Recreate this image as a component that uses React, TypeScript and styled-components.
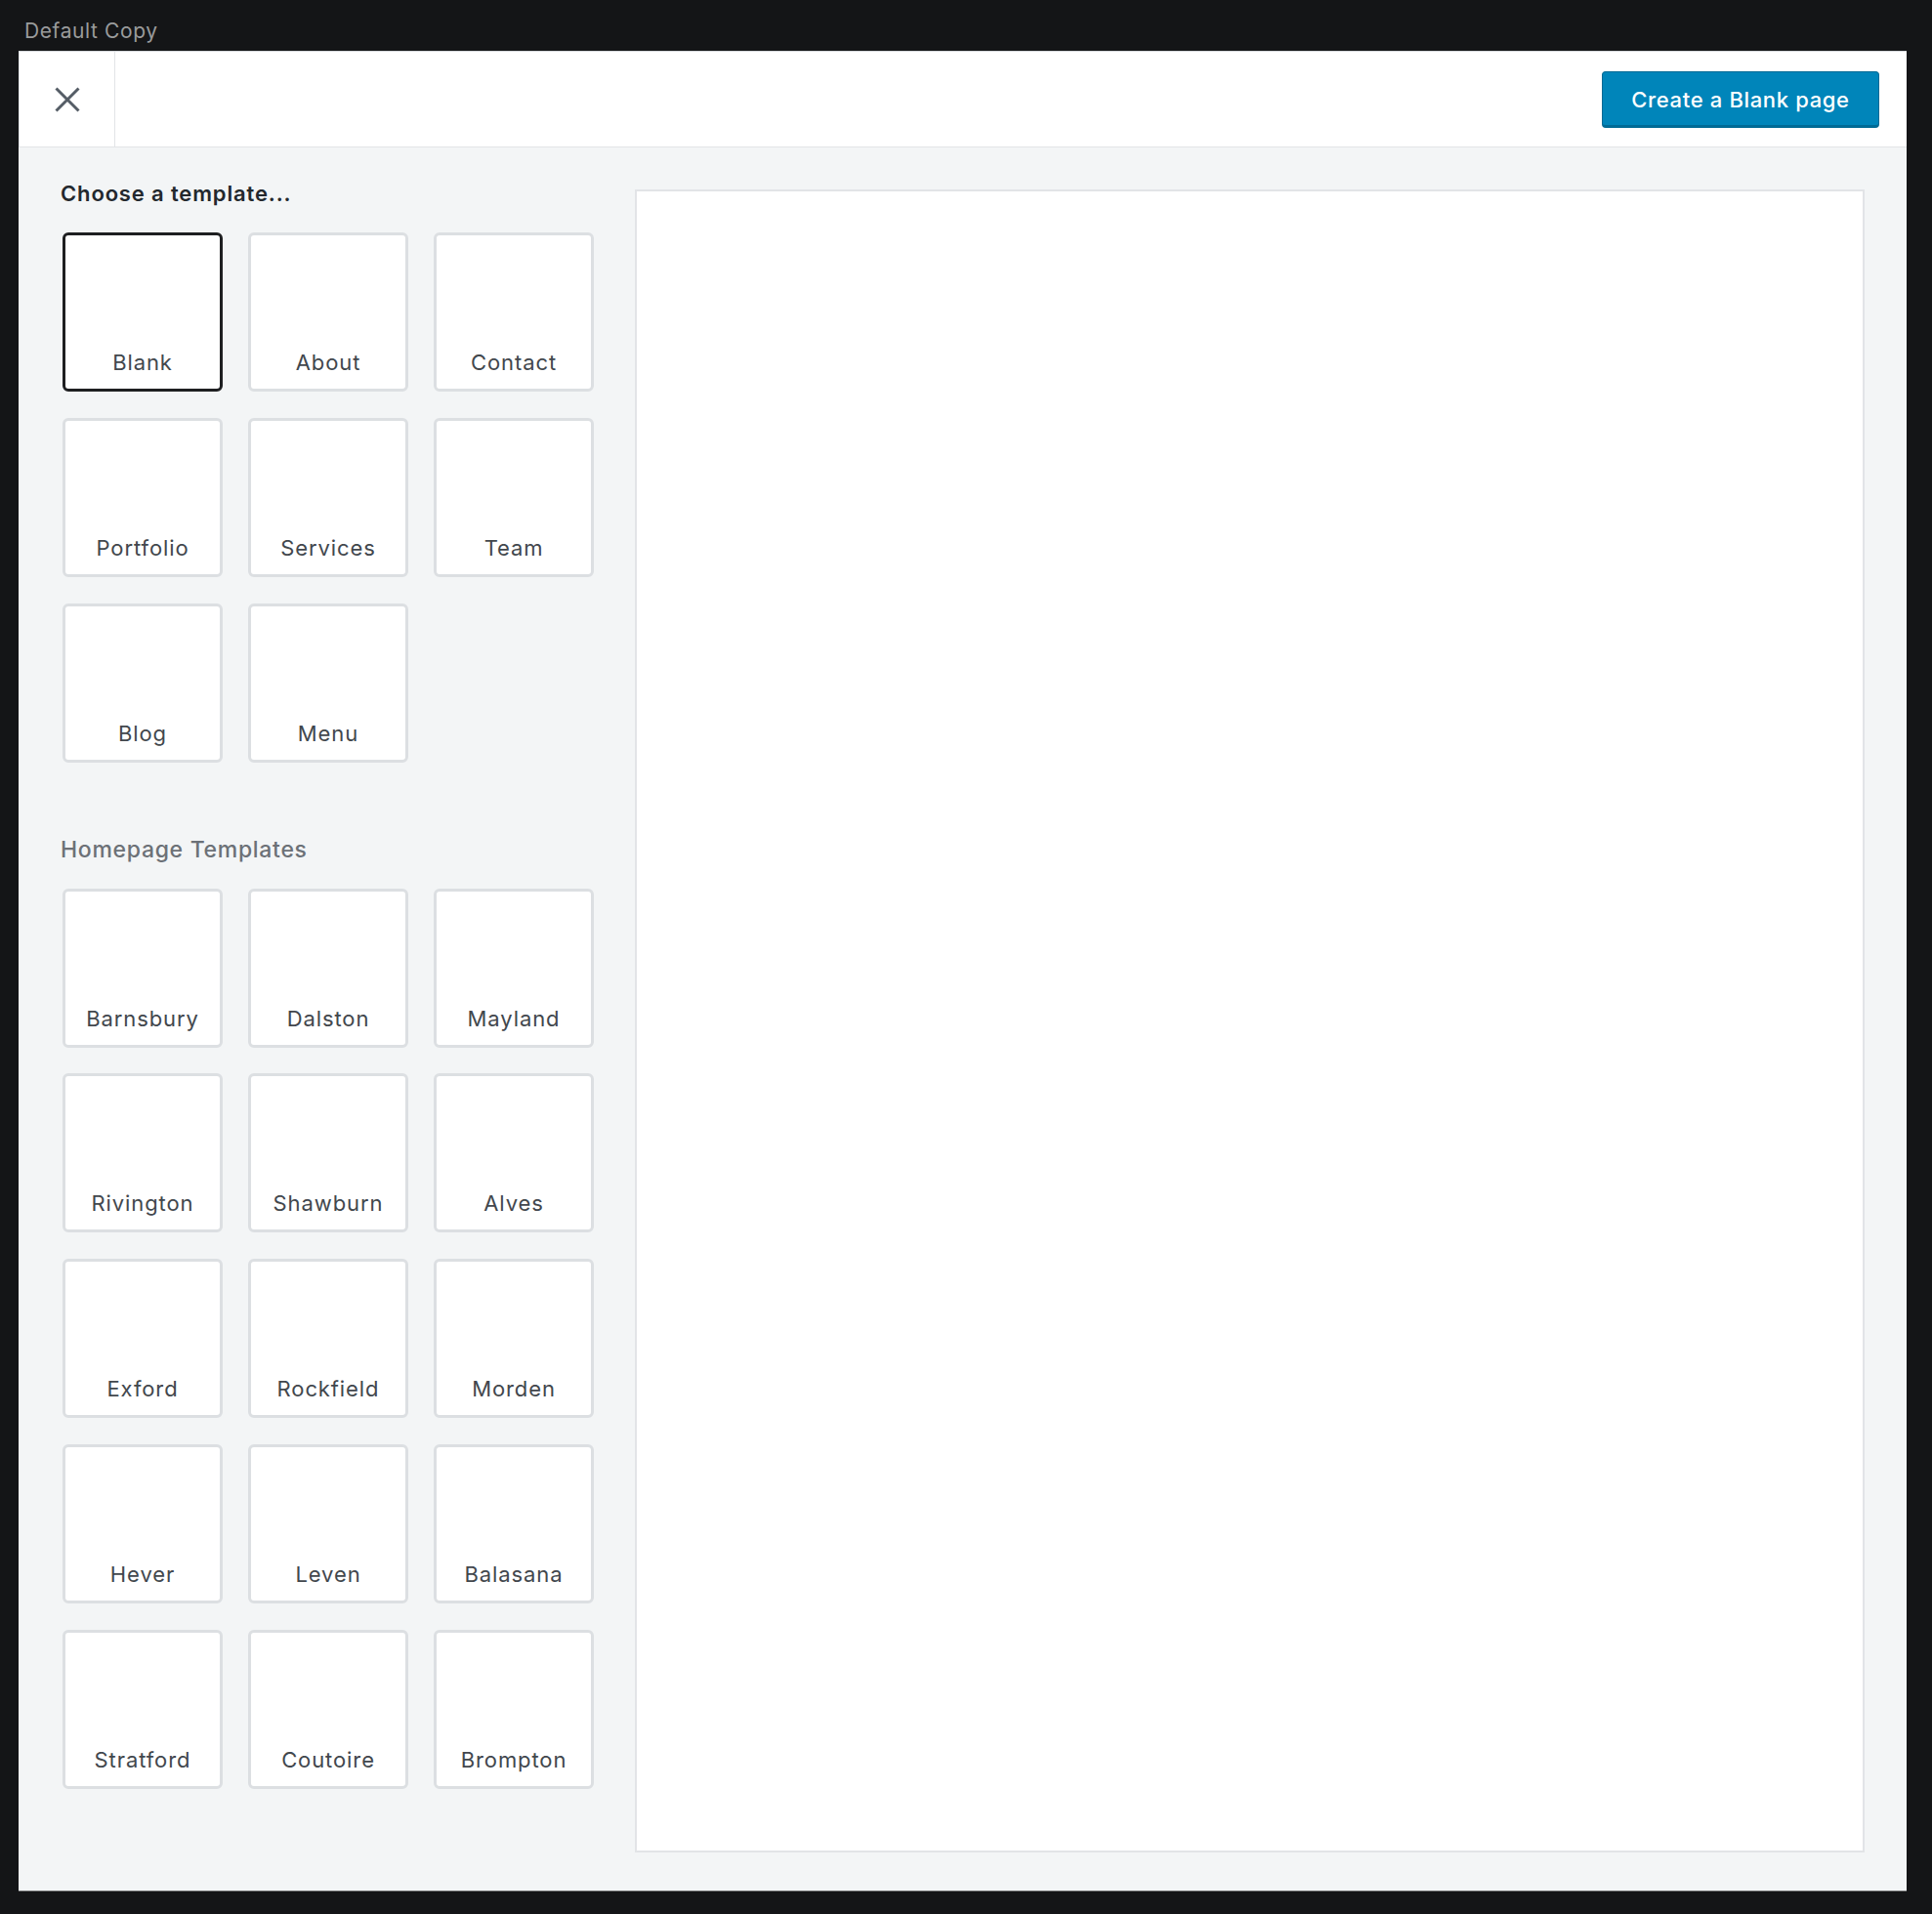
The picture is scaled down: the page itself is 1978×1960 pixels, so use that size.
import React from "react";
import styled, { createGlobalStyle } from "styled-components";

const GlobalStyle = createGlobalStyle`
  html, body {
    margin: 0;
    padding: 0;
    background: #141517;
  }
  body {
    font-family: Inter, "Noto Sans", "Liberation Sans", sans-serif;
    -webkit-font-smoothing: antialiased;
  }
  * { box-sizing: border-box; }
`;

const Page = styled.div`
  width: 1978px;
  height: 1960px;
  padding: 0 26px 23px 19px;
  display: flex;
  flex-direction: column;
`;

const TopBar = styled.div`
  height: 52px;
  padding: 12px 0 0 6px;
  line-height: 40px;
  font-size: 21px;
  letter-spacing: 0.6px;
  color: #9a9b9c;
`;

const Modal = styled.div`
  flex: 1;
  display: flex;
  flex-direction: column;
  background: #f3f5f6;
  border-top: 1px solid #d6d9dc;
  border-bottom: 1px solid #6a6b6c;
`;

const Header = styled.header`
  height: 98px;
  flex: none;
  display: flex;
  align-items: center;
  justify-content: space-between;
  background: #ffffff;
  border-bottom: 1px solid #e2e4e7;
  padding-right: 28px;
`;

const CloseButton = styled.button`
  width: 99px;
  height: 100%;
  border: none;
  border-left: 1px solid #e2e4e7;
  border-right: 1px solid #e2e4e7;
  background: #ffffff;
  display: flex;
  align-items: center;
  justify-content: center;
  padding: 0;
  cursor: pointer;
`;

const PrimaryButton = styled.button`
  height: 58px;
  width: 284px;
  border-radius: 4px;
  background: #0085ba;
  border: 1px solid #006a95;
  border-bottom-width: 3px;
  color: #ffffff;
  font-family: Inter, "Noto Sans", "Liberation Sans", sans-serif;
  font-size: 22px;
  font-weight: 500;
  letter-spacing: 0.65px;
  padding: 3px 0 0;
  cursor: pointer;
`;

const Body = styled.div`
  flex: 1;
  display: flex;
  gap: 42px;
  padding: 32px 43px 39px 44px;
  min-height: 0;
`;

const Sidebar = styled.div`
  width: 545px;
  flex: none;
  display: flex;
  flex-direction: column;
`;

const SectionTitle = styled.h2<{ $muted?: boolean; $top?: number }>`
  margin: ${(p) => p.$top ?? 0}px 0 25px -1px;
  font-size: ${(p) => (p.$muted ? 23 : 22)}px;
  line-height: 30px;
  letter-spacing: ${(p) => (p.$muted ? 0.7 : 0.85)}px;
  font-weight: ${(p) => (p.$muted ? 500 : 600)};
  color: ${(p) => (p.$muted ? "#6c7177" : "#23282d")};
`;

const Grid = styled.div`
  display: grid;
  grid-template-columns: repeat(3, 164px);
  grid-auto-rows: 163px;
  column-gap: 26px;
  row-gap: 26.8px;
  padding-left: 1px;
`;

const Tile = styled.button<{ $selected?: boolean }>`
  display: flex;
  flex-direction: column;
  justify-content: flex-end;
  align-items: center;
  padding: 0 0 12px;
  background: #ffffff;
  border: 3px solid ${(p) => (p.$selected ? "#1e1f21" : "#dcdfe2")};
  border-radius: 6px;
  font-family: Inter, "Noto Sans", "Liberation Sans", sans-serif;
  font-size: 22px;
  line-height: 30px;
  letter-spacing: 0.9px;
  color: #42474d;
  cursor: pointer;
`;

const Preview = styled.div`
  flex: 1;
  margin-top: 11px;
  background: #ffffff;
  border: 2px solid #e2e4e7;
`;

const pages = ["Blank", "About", "Contact", "Portfolio", "Services", "Team", "Blog", "Menu"];
const homepages = [
  "Barnsbury",
  "Dalston",
  "Mayland",
  "Rivington",
  "Shawburn",
  "Alves",
  "Exford",
  "Rockfield",
  "Morden",
  "Hever",
  "Leven",
  "Balasana",
  "Stratford",
  "Coutoire",
  "Brompton",
];

const CloseIcon = () => (
  <svg width="26" height="26" viewBox="0 0 26 26" aria-hidden="true">
    <path d="M1.5 1.5 L24.5 24.5 M24.5 1.5 L1.5 24.5" stroke="#555d66" strokeWidth="3" fill="none" />
  </svg>
);

export default function App() {
  return (
    <>
      <GlobalStyle />
      <Page>
        <TopBar>Default Copy</TopBar>
        <Modal>
          <Header>
            <CloseButton aria-label="Close">
              <CloseIcon />
            </CloseButton>
            <PrimaryButton>Create a Blank page</PrimaryButton>
          </Header>
          <Body>
            <Sidebar>
              <SectionTitle>Choose a template...</SectionTitle>
              <Grid>
                {pages.map((name, i) => (
                  <Tile key={name} $selected={i === 0}>
                    {name}
                  </Tile>
                ))}
              </Grid>
              <SectionTitle $muted $top={74}>
                Homepage Templates
              </SectionTitle>
              <Grid>
                {homepages.map((name) => (
                  <Tile key={name}>{name}</Tile>
                ))}
              </Grid>
            </Sidebar>
            <Preview />
          </Body>
        </Modal>
      </Page>
    </>
  );
}
